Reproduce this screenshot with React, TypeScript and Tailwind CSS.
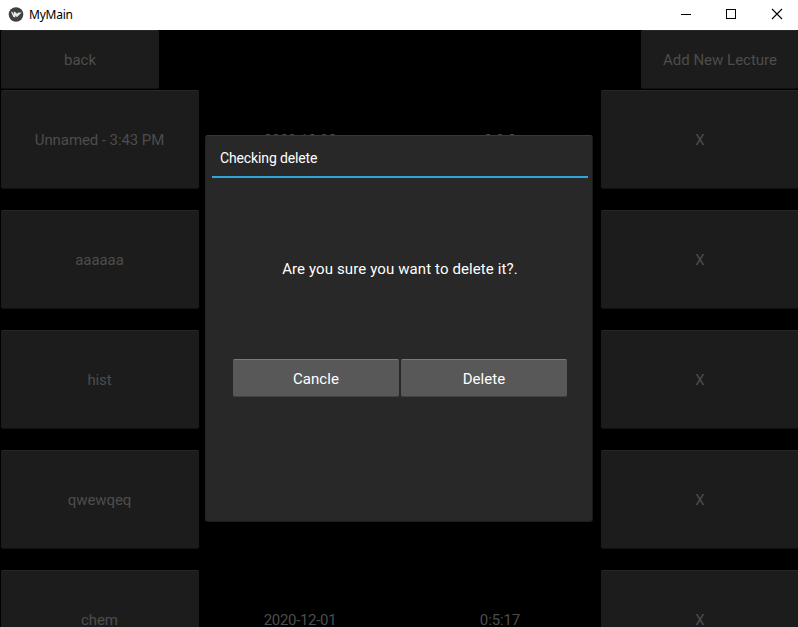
import React from "react";

type Lecture = { name: string; date?: string; time?: string };

const lectures: Lecture[] = [
  { name: "Unnamed - 3:43 PM", date: "2020-12-08", time: "0:0:8" },
  { name: "aaaaaa" },
  { name: "hist" },
  { name: "qwewqeq" },
  { name: "chem", date: "2020-12-01", time: "0:5:17" },
];

function DimButton({ className, children }: { className: string; children: React.ReactNode }) {
  return (
    <button
      className={`flex shrink-0 items-center justify-center rounded-[2px] border-t border-b border-t-[#272727] border-b-[#111111] bg-[#1c1c1c] text-[#4d4d4d] ${className}`}
    >
      {children}
    </button>
  );
}

function PopupButton({ children }: { children: React.ReactNode }) {
  return (
    <button className="flex h-[38px] w-[166px] items-center justify-center rounded-[2px] border-t border-b border-t-[#7c7c7c] border-b-[#434343] bg-[#585858] pt-0.5 text-[15px] tracking-[0.05px] text-white">
      {children}
    </button>
  );
}

function TitleBar() {
  return (
    <header className="flex h-[30px] items-center bg-white">
      <svg className="ml-2 h-4 w-4 shrink-0" viewBox="0 0 16 16">
        <circle cx="8" cy="7.5" r="7.3" fill="#3f4042" />
        <path d="M2.8 4.6L4.6 5.2L5.8 7.6V4.6L7.9 5.4L9 6.7L10.3 5.6H13.7L11.9 7.3L8.9 10.2L7.6 8.4L7.2 10.4L5.4 10Z" fill="#e8e8e8" />
      </svg>
      <h1 className="ml-[5px] font-['Noto_Sans',sans-serif] text-[12px] leading-4 tracking-[-0.22px] text-black">MyMain</h1>
      <svg className="ml-auto h-[30px] w-[138px]" viewBox="0 0 138 30" fill="none" stroke="#000" shapeRendering="crispEdges">
        <path d="M21 14.5H31" />
        <rect x="66.5" y="9.5" width="9" height="9" />
        <path d="M112 9L122 19M122 9L112 19" shapeRendering="auto" strokeWidth="1.1" />
      </svg>
    </header>
  );
}

export default function App() {
  return (
    <div className="relative h-[627px] w-[798px] overflow-hidden bg-black font-[Roboto,sans-serif] text-[15px]">
      <TitleBar />
      <nav className="flex h-[60px] justify-between pl-px">
        <DimButton className="h-[59px] w-[158px] pt-0.5">back</DimButton>
        <DimButton className="h-[59px] w-[157px] pt-0.5 pl-px">Add New Lecture</DimButton>
      </nav>
      <main className="flex flex-col">
        {lectures.map((lecture) => (
          <div key={lecture.name} className="flex h-[120px] items-start text-[#4d4d4d]">
            <DimButton className="ml-px h-[99px] w-[198px] pt-px pr-px tracking-[-0.08px]">{lecture.name}</DimButton>
            <div className="ml-px flex h-[100px] w-[200px] shrink-0 items-center justify-center tracking-[-0.3px]">{lecture.date}</div>
            <div className="flex h-[100px] w-[200px] shrink-0 items-center justify-center tracking-[-0.1px]">{lecture.time}</div>
            <DimButton className="ml-px h-[99px] w-[198px] pt-px">X</DimButton>
          </div>
        ))}
      </main>
      <section className="absolute top-[135px] left-[205px] flex h-[387px] w-[388px] flex-col rounded-[3px] border border-t-[#383838] border-r-[#1c1c1c] border-b-[#1c1c1c] border-l-[#222222] bg-[#282828] pr-1 pl-1.5 text-white">
        <h2 className="flex h-[42px] items-center border-b-2 border-[#2fa7d4] pt-1 pl-2 text-[14px] tracking-[-0.13px]">Checking delete</h2>
        <p className="flex h-[181px] items-center justify-center pt-px tracking-[0.11px]">Are you sure you want to delete it?.</p>
        <div className="flex justify-center gap-0.5">
          <PopupButton>Cancle</PopupButton>
          <PopupButton>Delete</PopupButton>
        </div>
      </section>
    </div>
  );
}
